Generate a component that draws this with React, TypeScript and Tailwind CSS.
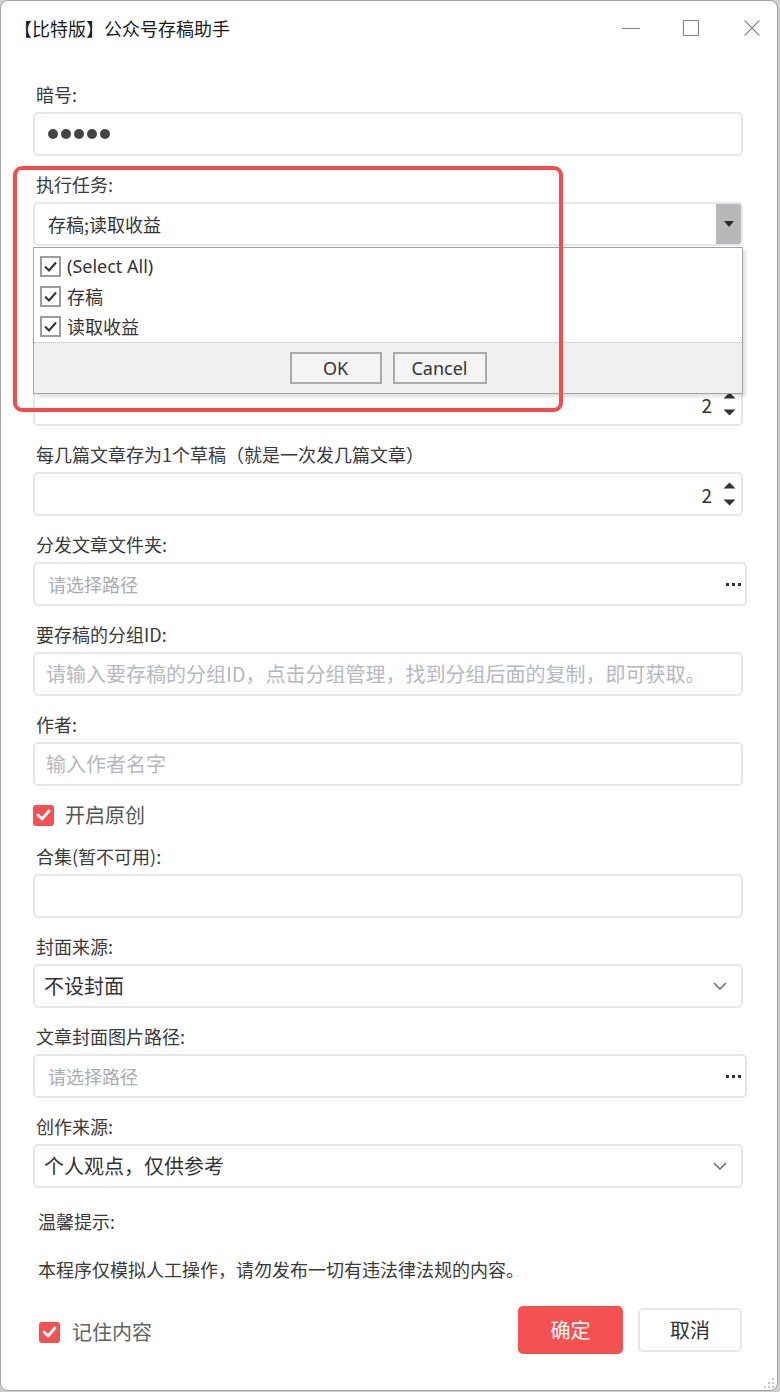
import type { ReactNode } from "react";

const cjk = "font-['Noto_Sans_CJK_SC','Noto_Sans',sans-serif]";
const latin = "font-['Noto_Sans','Noto_Sans_CJK_SC',sans-serif]";

function Label({ children, className = "" }: { children: ReactNode; className?: string }) {
  return (
    <div className={`mb-[6px] mt-[16px] h-[24px] pl-[3px] text-[18px] leading-[24px] text-[#3a3a3a] ${className}`}>
      {children}
    </div>
  );
}

function Box({ children, wide = false }: { children?: ReactNode; wide?: boolean }) {
  return (
    <div
      className={`flex h-[44px] items-center rounded-[5px] border-2 border-[#e6e7eb] bg-white ${
        wide ? "w-[714px]" : "w-[710px]"
      }`}
    >
      {children}
    </div>
  );
}

function Spinner() {
  return (
    <svg width="13" height="24" viewBox="0 0 13 24">
      <polygon points="0.5,6.5 6.5,0.5 12.5,6.5" fill="#333" />
      <polygon points="0.5,17.5 6.5,23.5 12.5,17.5" fill="#333" />
    </svg>
  );
}

function NumberBox({ value }: { value: string }) {
  return (
    <Box>
      <span className="ml-auto text-[19px] leading-none text-[#333]">{value}</span>
      <span className="ml-[11px] mr-[5px] flex">
        <Spinner />
      </span>
    </Box>
  );
}

function PathBox() {
  return (
    <Box wide>
      <span className="pl-[13px] text-[18px] text-[#a9acb3]">请选择路径</span>
      <span className="ml-auto mr-[4px] flex gap-[3px]">
        <i className="block h-[3px] w-[3px] bg-[#333]" />
        <i className="block h-[3px] w-[3px] bg-[#333]" />
        <i className="block h-[3px] w-[3px] bg-[#333]" />
      </span>
    </Box>
  );
}

function Chevron() {
  return (
    <svg width="14" height="8" viewBox="0 0 14 8" className="ml-auto mr-[14px]">
      <path d="M1 1 L7 7 L13 1" fill="none" stroke="#606266" strokeWidth="1.4" />
    </svg>
  );
}

function SelectBox({ text }: { text: string }) {
  return (
    <Box>
      <span className="pl-[9px] text-[20px] text-[#333]">{text}</span>
      <Chevron />
    </Box>
  );
}

function RedCheck() {
  return (
    <span className="flex h-[21px] w-[21px] items-center justify-center rounded-[3px] bg-[#f45252]">
      <svg width="15" height="12" viewBox="0 0 15 12">
        <path d="M2 6 L6 10 L13 2" fill="none" stroke="#fff" strokeWidth="2.8" strokeLinecap="round" strokeLinejoin="round" />
      </svg>
    </span>
  );
}

function GreyCheck() {
  return (
    <span className="flex h-[21px] w-[21px] items-center justify-center border-2 border-[#9d9d9d] bg-white">
      <svg width="13" height="11" viewBox="0 0 13 11">
        <path d="M1 5.5 L5 9.5 L12 1.5" fill="none" stroke="#333" strokeWidth="2" />
      </svg>
    </span>
  );
}

export default function App() {
  return (
    <div className={`relative h-[1392px] w-[780px] overflow-hidden bg-[#cfcfcf] ${cjk}`}>
      <div className="flex h-[1391px] w-[778px] flex-col rounded-[8px] border border-[#a3a3a3] bg-white">
        {/* title bar */}
        <div className="flex h-[54px] items-center pl-[13px]">
          <span className="text-[18px] leading-none text-[#1a1a1a]">【比特版】公众号存稿助手</span>
          <div className="ml-auto mr-[17px] flex items-center">
            <svg width="18" height="16" viewBox="0 0 18 16">
              <path d="M0 8.5 H18" stroke="#8a8a8a" strokeWidth="1.2" />
            </svg>
            <svg width="18" height="16" viewBox="0 0 18 16" className="ml-[42px]">
              <rect x="1.5" y="0.5" width="15" height="15" fill="none" stroke="#8a8a8a" strokeWidth="1.2" />
            </svg>
            <svg width="16" height="16" viewBox="0 0 16 16" className="ml-[44px]">
              <path d="M0.5 0.5 L15.5 15.5 M15.5 0.5 L0.5 15.5" stroke="#8a8a8a" strokeWidth="1.2" />
            </svg>
          </div>
        </div>

        {/* form */}
        <div className="flex flex-col pl-[32px]">
          <Label className="mt-[27px]">暗号:</Label>
          <Box>
            <span className="flex gap-[3px] pl-[13px]">
              <i className="block h-[10px] w-[10px] rounded-full bg-[#444]" />
              <i className="block h-[10px] w-[10px] rounded-full bg-[#444]" />
              <i className="block h-[10px] w-[10px] rounded-full bg-[#444]" />
              <i className="block h-[10px] w-[10px] rounded-full bg-[#444]" />
              <i className="block h-[10px] w-[10px] rounded-full bg-[#444]" />
            </span>
          </Box>

          <Label>执行任务:</Label>
          <div className="flex h-[44px] w-[710px] items-stretch overflow-hidden rounded-[5px] border-2 border-[#e6e7eb] bg-white">
            <span className="flex items-center pl-[13px] text-[18px] text-[#333]">存稿;读取收益</span>
            <span className="ml-auto flex w-[25px] items-center justify-center bg-[#b8b8b8]">
              <svg width="10" height="6" viewBox="0 0 10 6">
                <polygon points="0,0 10,0 5,6" fill="#2b2b2b" />
              </svg>
            </span>
          </div>

          {/* these two fields sit under the open dropdown */}
          <Label className="invisible">每次运行篇数:</Label>
          <NumberBox value="2" />

          <Label className="invisible">每次读取天数:</Label>
          <NumberBox value="2" />

          <Label>每几篇文章存为1个草稿（就是一次发几篇文章）</Label>
          <NumberBox value="2" />

          <Label>分发文章文件夹:</Label>
          <PathBox />

          <Label>要存稿的分组ID:</Label>
          <Box>
            <span className="pl-[11px] text-[20px] text-[#b5b8c0]">
              请输入要存稿的分组ID，点击分组管理，找到分组后面的复制，即可获取。
            </span>
          </Box>

          <Label>作者:</Label>
          <Box>
            <span className="pl-[11px] text-[20px] text-[#b5b8c0]">输入作者名字</span>
          </Box>

          <div className="mt-[17px] flex h-[24px] items-center">
            <RedCheck />
            <span className="ml-[11px] text-[20px] text-[#555]">开启原创</span>
          </div>

          <Label className="mt-[17px]">合集(暂不可用):</Label>
          <Box />

          <Label>封面来源:</Label>
          <SelectBox text="不设封面" />

          <Label>文章封面图片路径:</Label>
          <PathBox />

          <Label>创作来源:</Label>
          <SelectBox text="个人观点，仅供参考" />

          <div className="mt-[21px] h-[24px] pl-[5px] text-[18px] leading-[24px] text-[#3a3a3a]">温馨提示:</div>
          <div className="mt-[24px] h-[24px] pl-[5px] text-[18px] leading-[24px] text-[#3a3a3a]">
            本程序仅模拟人工操作，请勿发布一切有违法律法规的内容。
          </div>

          <div className="mt-[25px] flex w-[710px] items-center">
            <span className="ml-[6px] mt-[4px] flex items-center">
              <RedCheck />
              <span className="ml-[12px] text-[20px] text-[#606266]">记住内容</span>
            </span>
            <button
              type="button"
              className="ml-auto h-[48px] w-[105px] rounded-[5px] bg-[#f45252] text-[20px] text-white"
            >
              确定
            </button>
            <button
              type="button"
              className="ml-[15px] mr-[1px] h-[44px] w-[104px] rounded-[5px] border-2 border-[#e6e7eb] bg-white text-[20px] text-[#303133]"
            >
              取消
            </button>
          </div>
        </div>
      </div>

      {/* resize grip */}
      <svg width="12" height="12" viewBox="0 0 12 12" className="absolute bottom-[3px] right-[5px]">
        <rect x="9" y="1" width="2" height="2" fill="#c4c4c4" />
        <rect x="5" y="5" width="2" height="2" fill="#c4c4c4" />
        <rect x="9" y="5" width="2" height="2" fill="#c4c4c4" />
        <rect x="1" y="9" width="2" height="2" fill="#c4c4c4" />
        <rect x="5" y="9" width="2" height="2" fill="#c4c4c4" />
        <rect x="9" y="9" width="2" height="2" fill="#c4c4c4" />
      </svg>

      {/* open multi-select dropdown */}
      <div className="absolute left-[33px] top-[247px] flex h-[147px] w-[710px] flex-col border border-[#a3a3a3] bg-white shadow-[3px_3px_3px_rgba(0,0,0,0.12)]">
        <div className={`flex h-[94px] flex-col pl-[6px] pt-[3px] ${latin}`}>
          {["(Select All)", "存稿", "读取收益"].map((item) => (
            <div key={item} className="flex h-[30px] items-center">
              <GreyCheck />
              <span className={`ml-[6px] text-[18px] leading-none text-[#333] ${item === "(Select All)" ? latin : cjk}`}>
                {item}
              </span>
            </div>
          ))}
        </div>
        <div className={`flex flex-1 items-center justify-center gap-[11px] border-t border-dotted border-[#bdbdbd] bg-[#f0f0f0] ${latin}`}>
          <button type="button" className="h-[32px] w-[92px] border-2 border-[#ababab] bg-[#f4f4f4] text-[18px] text-[#333]">
            OK
          </button>
          <button type="button" className="h-[32px] w-[94px] border-2 border-[#ababab] bg-[#f4f4f4] text-[18px] text-[#333]">
            Cancel
          </button>
        </div>
      </div>

      {/* red highlight */}
      <div className="pointer-events-none absolute left-[13px] top-[166px] h-[246px] w-[550px] rounded-[9px] border-4 border-[#f44b4b]" />
    </div>
  );
}
